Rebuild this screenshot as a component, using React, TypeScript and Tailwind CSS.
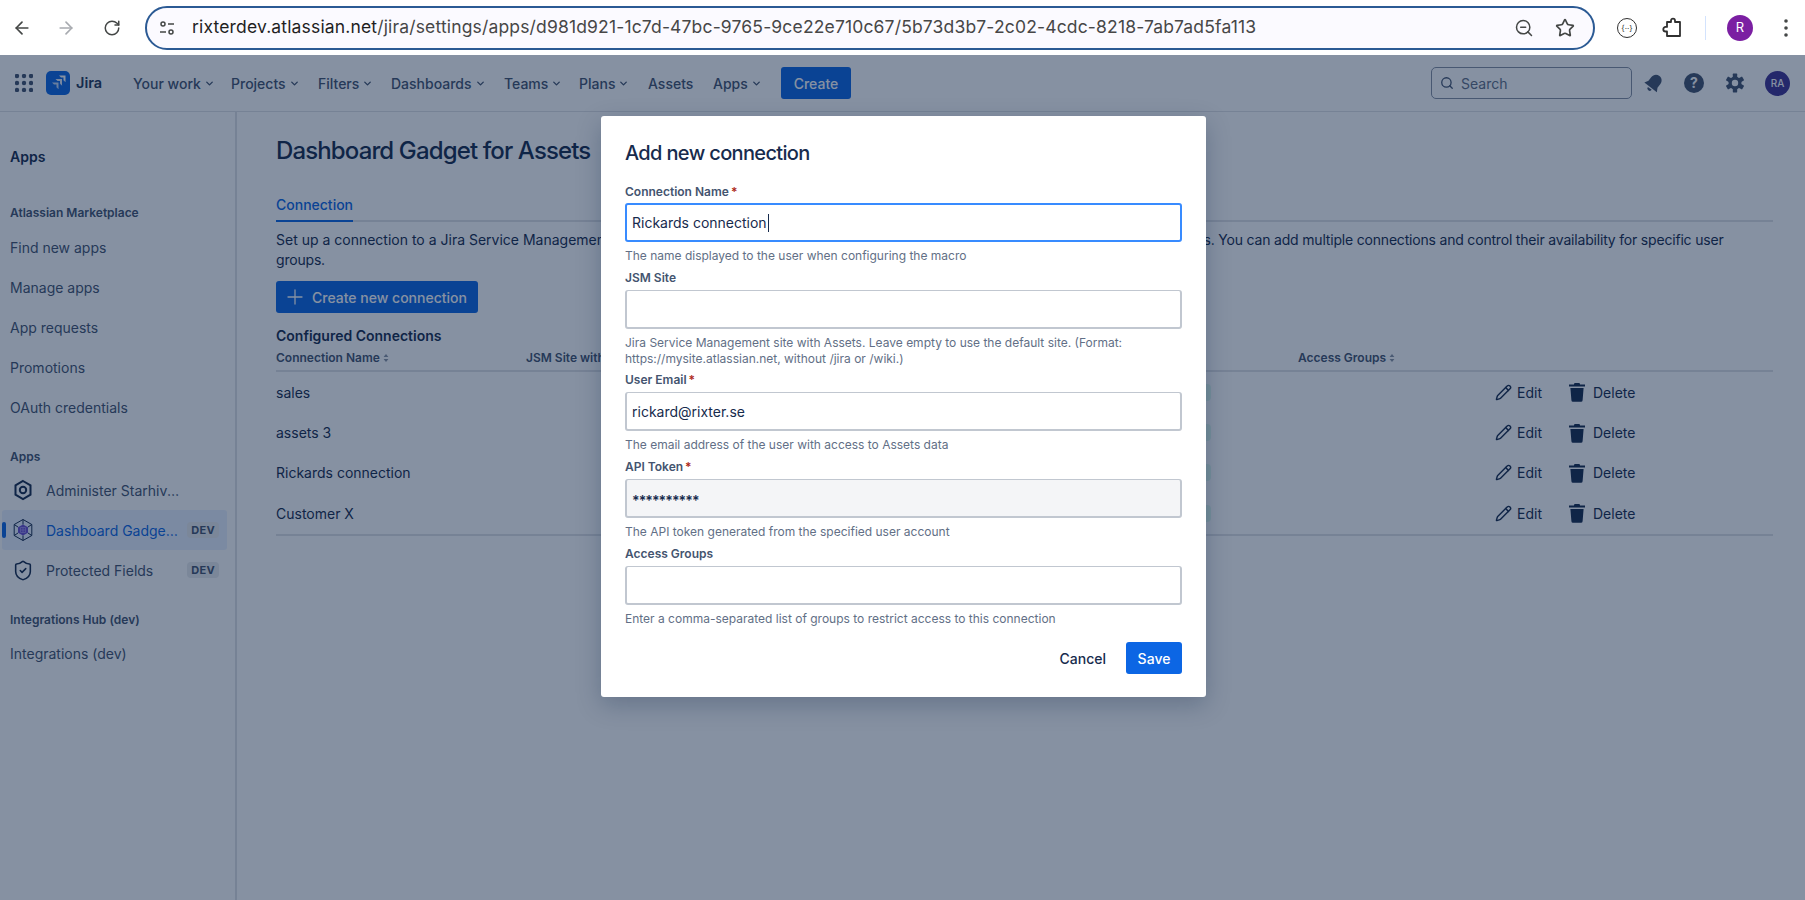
import { ArrowLeft, ArrowRight, RotateCw, ZoomOut, Star, ChevronDown, Search, Plus, Pencil, ShieldCheck } from "lucide-react";

const font = { fontFamily: "Inter, 'Liberation Sans', sans-serif" };

function Caret() {
  return <ChevronDown size={11} strokeWidth={3} className="ml-[3px] mt-[1px]" />;
}

function NavItem({ label, caret = true, cls }: { label: string; caret?: boolean; cls: string }) {
  return (
    <div className={`flex items-center text-[14px] font-medium text-[#44546f] ${cls}`}>
      {label}
      {caret && <Caret />}
    </div>
  );
}

function SortIcon() {
  return (
    <svg width="6" height="10" viewBox="0 0 6 10" className="ml-[3px] text-[#8993a4]" fill="currentColor">
      <path d="M3 1 L5.4 4 H.6Z" />
      <path d="M3 9 L5.4 6 H.6Z" />
    </svg>
  );
}

function JiraLogo() {
  return (
    <svg width="24" height="24" viewBox="0 0 24 24">
      <rect width="24" height="24" rx="5" fill="#0c66e4" />
      <path d="M13 4.500h6.500V11l-2-2V6.500H15z" fill="#fff" />
      <path d="M9.500 8h6.500v6.500l-2-2V10h-2.500z" fill="#fff" opacity=".88" />
      <path d="M6 11.500h6.500V18l-2-2v-2.500H8z" fill="#fff" opacity=".75" />
      <path d="M17.500 9l2 2M14 12.500l2 2M10.500 16l2 2" stroke="#fff" strokeOpacity=".5" strokeWidth=".5" />
    </svg>
  );
}

function TrashFilled() {
  return (
    <svg width="18" height="20" viewBox="0 0 18 20" fill="#172b4d">
      <path d="M6.500 1h5l.6 1.400H17V4.400H1V2.400h4.900z" />
      <path d="M2.400 6h13.200l-1 12.200a1.600 1.600 0 0 1-1.600 1.500H5a1.600 1.600 0 0 1-1.600-1.500z" />
    </svg>
  );
}

function SideHeading({ children, cls }: { children: string; cls: string }) {
  return <div className={`pl-[10px] text-[12px] font-semibold leading-4 text-[#44546f] ${cls}`}>{children}</div>;
}

function SideLink({ children }: { children: string }) {
  return <div className="flex h-10 items-center pl-[10px] text-[14px] text-[#44546f]">{children}</div>;
}

function Dev() {
  return (
    <span className="block rounded-[4px] bg-[#e9ebee] px-[4px] text-[11px] font-bold leading-4 tracking-[0.3px] text-[#44546f]">DEV</span>
  );
}

function AppRow({ icon, label, dev, active }: { icon: React.ReactNode; label: string; dev?: boolean; active?: boolean }) {
  return (
    <div className={`relative mx-[2px] flex h-10 w-[225px] items-center rounded-[3px] pl-[10px] pr-2 text-[14px] ${active ? "bg-[#e9f2ff] text-[#0c66e4]" : "text-[#44546f]"}`}>
      {active && <span className="absolute left-0 top-[12px] h-4 w-[4px] rounded-full bg-[#0c66e4]" />}
      <span className="mr-[12px] flex w-[22px] justify-center">{icon}</span>
      <span className="w-[134px] truncate">{label}</span>
      {dev && <span className="ml-auto"><Dev /></span>}
    </div>
  );
}

const rows = ["sales", "assets 3", "Rickards connection", "Customer X"];

function Field({ label, req, help, value, tall, active, gray, first, secret }: { label: string; req?: boolean; help: React.ReactNode; value?: string; tall?: boolean; active?: boolean; gray?: boolean; first?: boolean; secret?: boolean }) {
  return (
    <div className="mb-[6px]">
      <div className={`flex h-4 items-center text-[12px] font-semibold text-[#44546f] ${first ? "mb-[3px]" : "mb-1"}`}>
        {label}
        {req && <span className="ml-[2px] text-[#ae2a19]">*</span>}
      </div>
      <div className={`flex h-[39px] items-center rounded-[3px] px-[5px] text-[14px] text-[#172b4d] ${active ? "border-2 border-[#388bff]" : "border-2 border-[#c1c7d0] border-t-[1.5px]"} ${gray ? "bg-[#f4f5f7]" : "bg-white"}`}>
        {secret ? <span className="mt-[4px] text-[14px] font-semibold tracking-[-0.9px]">{value}</span> : value}
        {active && <span className="ml-[1px] h-[18px] w-px bg-[#172b4d]" />}
      </div>
      <div className={`mt-[6px] text-[12px] text-[#626f86] ${tall ? "leading-[15.5px]" : "leading-4"}`}>{help}</div>
    </div>
  );
}

export default function App() {
  return (
    <div style={font} className="flex h-[900px] w-[1805px] flex-col overflow-hidden bg-white">
      {/* browser chrome */}
      <div className="flex h-[55px] shrink-0 items-center bg-white text-[#3c4043]">
        <ArrowLeft size={20} strokeWidth={2} className="ml-[12px] text-[#444746]" />
        <ArrowRight size={20} strokeWidth={2} className="ml-[24px] text-[#a8abb0]" />
        <RotateCw size={18} strokeWidth={2} className="ml-[27px] text-[#444746]" />
        <div className="ml-[24px] flex h-[44px] w-[1450px] items-center rounded-full border-2 border-[#2b5a94] bg-[#fbfaff] pl-[12px] pr-[18px]">
          <svg width="16" height="16" viewBox="0 0 16 16" fill="none" stroke="#444746" strokeWidth="1.5">
            <circle cx="4" cy="4" r="2" />
            <path d="M9 4h6M1 12h6" />
            <circle cx="12" cy="12" r="2" />
          </svg>
          <div className="ml-[17px] flex-1 whitespace-nowrap text-[17.500px] tracking-[0.160px] text-[#5f6368]">
            <span className="text-[#1f1f1f]">rixterdev.atlassian.net</span>
            <span className="text-[#474747]">/jira/settings/apps/d981d921-1c7d-47bc-9765-9ce22e710c67/5b73d3b7-2c02-4cdc-8218-7ab7ad5fa113</span>
          </div>
          <ZoomOut size={20} strokeWidth={1.8} className="text-[#444746]" />
          <Star size={20} strokeWidth={2} className="ml-[21px] text-[#444746]" />
        </div>
        <div className="ml-[22px] flex h-5 w-5 items-center justify-center rounded-full border border-[#303030] text-[8px] leading-none text-[#303030]">{"{··}"}</div>
        <svg width="22" height="22" viewBox="0 0 22 22" fill="none" stroke="#303030" strokeWidth="1.8" strokeLinejoin="round" className="ml-[25px]">
          <path d="M5 5h4V3.600a2 2 0 0 1 4 0V5h5v14H5v-4.500H3.600a2.300 2.300 0 0 1 0-4.600H5z" />
        </svg>
        <div className="ml-[21px] h-6 w-px bg-[#d3e3fd]" />
        <div className="ml-[21px] flex h-[26px] w-[26px] items-center justify-center rounded-full bg-[#7b1fa2] text-[13px] text-white">R</div>
        <svg width="4" height="18" viewBox="0 0 4 18" className="ml-[31px]" fill="#444746">
          <circle cx="2" cy="2" r="1.800" />
          <circle cx="2" cy="9" r="1.800" />
          <circle cx="2" cy="16" r="1.800" />
        </svg>
      </div>

      {/* jira page */}
      <div className="relative flex min-h-0 flex-1 flex-col">
        <div className="flex h-[57px] shrink-0 items-center border-b border-[#dfe1e6] bg-white">
          <svg width="18" height="18" viewBox="0 0 18 18" fill="#44546f" className="ml-[15px]">
            {[2, 9, 16].map((y) =>
              [2, 9, 16].map((x) => <circle key={`${x}${y}`} cx={x} cy={y} r="2.200" />)
            )}
          </svg>
          <div className="ml-[13px]"><JiraLogo /></div>
          <span className="ml-[6px] w-[57px] text-[14.500px] font-semibold text-[#253858]">Jira</span>
          <NavItem label="Your work" cls="w-[98px]" />
          <NavItem label="Projects" cls="w-[87px]" />
          <NavItem label="Filters" cls="w-[73px]" />
          <NavItem label="Dashboards" cls="w-[113px]" />
          <NavItem label="Teams" cls="w-[75px]" />
          <NavItem label="Plans" cls="w-[69px]" />
          <NavItem label="Assets" caret={false} cls="w-[65px]" />
          <NavItem label="Apps" cls="w-[68px]" />
          <div className="flex h-8 w-[70px] items-center justify-center rounded-[3px] bg-[#0c66e4] text-[14px] font-medium text-white">Create</div>
          <div className="ml-[580px] flex h-8 w-[201px] items-center rounded-[5px] border border-[#8590a2] bg-white pl-[8px] text-[14px] text-[#626f86]">
            <Search size={14} strokeWidth={2.200} className="mr-[7px] text-[#44546f]" />
            Search
          </div>
          <svg width="22" height="22" viewBox="0 0 20 20" fill="#44546f" className="ml-[11px]">
            <g transform="rotate(38 10 10)">
              <path d="M10 2C6.900 2 4.800 4.400 4.800 7.500V11.500L2.800 15h14.400l-2-3.500V7.500C15.200 4.400 13.100 2 10 2z" />
              <path d="M7.800 16.200h4.400a2.200 2.200 0 0 1-4.400 0z" />
            </g>
          </svg>
          <svg width="20" height="20" viewBox="0 0 20 20" className="ml-[19px]">
            <circle cx="10" cy="10" r="10" fill="#44546f" />
            <text x="10" y="15" textAnchor="middle" fontSize="14" fontWeight="700" fill="#fff">?</text>
          </svg>
          <svg width="20" height="20" viewBox="0 0 20 20" className="ml-[21px]" fill="#44546f">
            <path fillRule="evenodd" d="M10 3.500a6.500 6.500 0 1 1 0 13 6.500 6.500 0 0 1 0-13zm0 3.300a3.200 3.200 0 1 0 0 6.400 3.200 3.200 0 0 0 0-6.400z" />
            {[0, 60, 120, 180, 240, 300].map((a) => (
              <rect key={a} x="7.800" y="0.600" width="4.400" height="4" rx="0.600" transform={`rotate(${a} 10 10)`} />
            ))}
          </svg>
          <div className="ml-[20px] flex h-[25px] w-[25px] items-center justify-center rounded-full bg-[#403294] text-[10px] font-medium text-white">RA</div>
        </div>

        <div className="flex min-h-0 flex-1">
          <aside className="w-[237px] shrink-0 border-r-2 border-[#dfe1e6] bg-white">
            <div className="mt-[37px] pl-[10px] text-[14px] font-semibold leading-4 text-[#172b4d]">Apps</div>
            <SideHeading cls="mt-[40px] mb-[6px]">Atlassian Marketplace</SideHeading>
            <SideLink>Find new apps</SideLink>
            <SideLink>Manage apps</SideLink>
            <SideLink>App requests</SideLink>
            <SideLink>Promotions</SideLink>
            <SideLink>OAuth credentials</SideLink>
            <SideHeading cls="mt-[22px] mb-[5px]">Apps</SideHeading>
            <AppRow
              label="Administer Starhive Connect"
              icon={
                <svg width="20" height="22" viewBox="0 0 20 22" fill="none" stroke="#172b4d" strokeWidth="2">
                  <path d="M10 2l7.500 4.300v9.400L10 20l-7.500-4.300V6.300z" />
                  <circle cx="10" cy="11" r="3.200" />
                </svg>
              }
            />
            <AppRow
              active
              dev
              label="Dashboard Gadget for Assets"
              icon={
                <svg width="22" height="24" viewBox="0 0 22 24" fill="none">
                  <path d="M11 6.500l5 2.800v5.400L11 17.500l-5-2.800V9.300z" fill="#6b4fd1" />
                  <path d="M11 1.500l8.800 5v11l-8.800 5-8.800-5v-11zM11 1.500v5M19.800 6.500 16 9M19.800 17.500 16 15M11 22.500v-5M2.200 17.500 6 15M2.200 6.500 6 9" stroke="#172b4d" strokeWidth="1" />
                  <path d="M8.500 9.500h5v5h-5zM8.500 12h5M11 9.500v5" stroke="#a99cf0" strokeWidth=".7" />
                </svg>
              }
            />
            <AppRow
              dev
              label="Protected Fields"
              icon={<ShieldCheck size={23} strokeWidth={1.7} className="text-[#172b4d]" />}
            />
            <SideHeading cls="mt-[22px] mb-[5px]">Integrations Hub (dev)</SideHeading>
            <SideLink>Integrations (dev)</SideLink>
          </aside>

          <main className="min-w-0 flex-1 bg-white pl-[39px] pr-[32px]">
            <h1 className="mt-[24px] text-[24px] font-medium leading-[30px] tracking-[-0.87px] text-[#172b4d]">Dashboard Gadget for Assets</h1>
            <div className="mt-[29px] border-b-2 border-[#dfe1e6]">
              <div className="-mb-[2px] w-fit border-b-2 border-[#0c66e4] pb-[5px] text-[14px] font-medium leading-5 text-[#0c66e4]">Connection</div>
            </div>
            <p className="mt-[8px] text-[14px] leading-5 text-[#172b4d]">
              Set up a connection to a Jira Service Management{" "}
              <span className="inline-block w-[590px] overflow-hidden whitespace-nowrap align-bottom">site with Assets to make its object data available in dashboard gadgets on this site</span>
              <span className="tracking-[-0.19px]">s. You can add multiple connections and control their availability for specific user groups.</span>
            </p>
            <div className="mt-[11px] flex h-8 w-[202px] items-center rounded-[3px] bg-[#0c66e4] pl-[7px] text-[14px] font-medium text-white">
              <Plus size={24} strokeWidth={1.300} className="mr-[5px]" />
              Create new connection
            </div>
            <div className="mt-[15px] text-[14px] font-semibold leading-4 text-[#172b4d]">Configured Connections</div>
            <div className="mt-[4px] flex h-[20px] items-center border-b-0 text-[12px] font-semibold text-[#44546f]">
              <div className="flex w-[250px] items-center">Connection Name<SortIcon /></div>
              <div className="flex w-[772px] items-center">JSM Site with Assets<SortIcon /></div>
              <div className="flex items-center">Access Groups<SortIcon /></div>
            </div>
            <div className="mt-[2px] border-y-2 border-[#dfe1e6]">
              {rows.map((r) => (
                <div key={r} className="flex h-[40.400px] items-center text-[14px] text-[#172b4d]">
                  <div className="w-[925px]">{r}</div>
                  <div className="h-[17px] w-[10px] rounded-r-[4px] bg-[#dffcf0]" />
                  <div className="ml-[284px] flex items-center">
                    <Pencil size={17} strokeWidth={2} className="mr-[5px] text-[#172b4d]" />
                    Edit
                    <span className="ml-[26px] mr-[7px]"><TrashFilled /></span>
                    Delete
                  </div>
                </div>
              ))}
            </div>
          </main>
        </div>

        {/* blanket */}
        <div className="absolute inset-0 bg-[#091e42]/49" />

        {/* modal */}
        <div className="absolute left-[601px] top-[61px] h-[581px] w-[605px] rounded-[3px] bg-white px-6 pt-[25px] shadow-[0_8px_24px_rgba(9,30,66,0.25)]">
          <h2 className="mb-[19px] text-[20px] font-medium leading-6 tracking-[-0.65px] text-[#172b4d]">Add new connection</h2>
          <Field first label="Connection Name" req value="Rickards connection" active help="The name displayed to the user when configuring the macro" />
          <Field label="JSM Site" tall help={<>Jira Service Management site with Assets. Leave empty to use the default site. (Format:<br />https://mysite.atlassian.net, without /jira or /wiki.)</>} />
          <Field label="User Email" req value="rickard@rixter.se" help="The email address of the user with access to Assets data" />
          <Field label="API Token" req gray secret value="**********" help="The API token generated from the specified user account" />
          <Field label="Access Groups" help="Enter a comma-separated list of groups to restrict access to this connection" />
          <div className="mt-[15px] flex items-center justify-end">
            <span className="mr-[20px] text-[14px] font-medium text-[#172b4d]">Cancel</span>
            <div className="flex h-8 w-[56px] items-center justify-center rounded-[3px] bg-[#0c66e4] text-[14px] font-medium text-white">Save</div>
          </div>
        </div>
      </div>
    </div>
  );
}
